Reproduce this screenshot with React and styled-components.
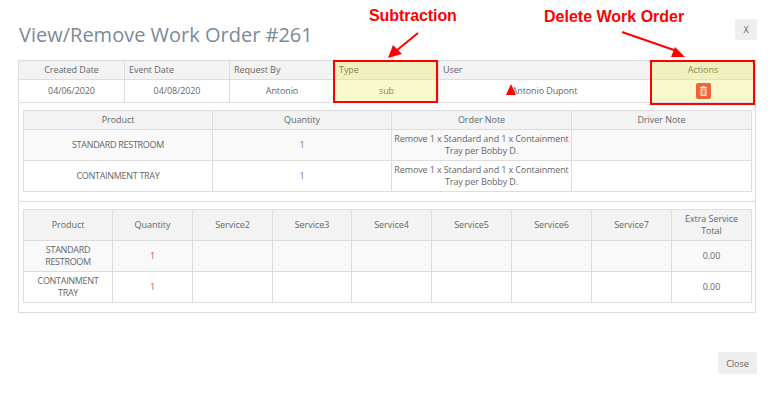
import React from 'react';
import styled, { createGlobalStyle } from 'styled-components';

const Global = createGlobalStyle`
  html, body { margin: 0; padding: 0; background: #fff; }
  body { font-family: "Open Sans", sans-serif; font-size: 9px; color: #666; }
`;
const Page = styled.div`
  position: relative;
  width: 776px;
  height: 405px;
  overflow: hidden;
  padding: 19px 19px 0 18px;
  box-sizing: border-box;
`;
const Header = styled.div`
  display: flex;
  justify-content: space-between;
  align-items: flex-start;
  height: 41px;
`;
const Title = styled.h3`
  margin: 5px 0 0 1px;
  font-size: 20px;
  line-height: 22px;
  font-weight: 400;
  color: #7b8a97;
`;
const GreyButton = styled.button`
  border: 0;
  border-radius: 2px;
  background: #eeeeee;
  color: #666;
  font: 400 9px "Open Sans", sans-serif;
  padding: 0;
  width: ${p => p.$w}px;
  height: ${p => p.$h}px;
`;
const Table = styled.table`
  width: ${p => p.$w}px;
  table-layout: fixed;
  border-collapse: collapse;
  border: 1px solid #ddd;
  margin: ${p => p.$m || 0};
`;
const Th = styled.th`
  background: ${p => (p.$hl ? '#f0f0c0' : '#f3f3f3')};
  border: 1px solid #ddd;
  height: ${p => p.$h}px;
  padding: 0 4px;
  font-size: 9px;
  line-height: 12px;
  font-weight: 400;
  letter-spacing: -0.05px;
  color: ${p => (p.$hl ? '#8a8a50' : '#666')};
  text-align: ${p => (p.$left ? 'left' : 'center')};
  box-sizing: border-box;
`;
const Td = styled.td`
  background: ${p => (p.$hl ? '#f8f8cc' : p.$odd ? '#f9f9f9' : '#fff')};
  border: 1px solid #ddd;
  height: ${p => p.$h}px;
  padding: 0 ${p => (p.$tight ? 2 : 4)}px;
  font-size: 9px;
  line-height: 12px;
  letter-spacing: ${p => p.$ls || '-0.1px'};
  color: ${p => p.$color || '#666'};
  text-align: center;
  box-sizing: border-box;
`;
const PanelCell = styled.td`
  border: 1px solid #ddd;
  padding: 0;
`;
const Section = styled.div`
  padding: ${p => p.$pad};
  border-bottom: ${p => (p.$line ? '1px solid #ddd' : '0')};
`;
const TrashButton = styled.span`
  display: inline-flex;
  align-items: center;
  justify-content: center;
  width: 15px;
  height: 16px;
  border-radius: 2px;
  background: #f0643a;
  vertical-align: middle;
  margin-top: -1px;
`;
const Footer = styled.div`
  display: flex;
  justify-content: flex-end;
  margin-top: 39px;
`;
const Callout = styled.div`
  position: absolute;
  left: ${p => p.$x}px;
  top: ${p => p.$y}px;
  font: 700 16px "Liberation Sans", Arial, sans-serif;
  line-height: 18px;
  letter-spacing: ${p => p.$ls || 0};
  color: #f00;
  white-space: nowrap;
`;
const Mark = styled.div`
  position: absolute;
  left: ${p => p.$x}px;
  top: ${p => p.$y}px;
  width: ${p => p.$w}px;
  height: ${p => p.$h}px;
  border: 2px solid #f00;
  box-sizing: border-box;
`;
const Overlay = styled.svg`
  position: absolute;
  left: 0;
  top: 0;
  pointer-events: none;
`;

const Cols = ({ w }) => <colgroup>{w.map((x, i) => <col key={i} style={{ width: x }} />)}</colgroup>;

const Trash = () => (
  <svg width="7" height="10" viewBox="0 0 7 10">
    <path fill="#fde3cf" d="M2.200 0h2.600l.4 1H7v1H0V1h1.800zM.5 2.500h6V9a1 1 0 0 1-1 1h-4a1 1 0 0 1-1-1z" />
    <path fill="#f58a63" d="M1.800 3.500h3.400V8.800H1.800z" />
  </svg>
);

const note = 'Remove 1 x Standard and 1 x Containment Tray per Bobby D.';
const services = ['Service2', 'Service3', 'Service4', 'Service5', 'Service6', 'Service7'];

export default function App() {
  return (
    <Page>
      <Global />
      <Header>
        <Title>View/Remove Work Order #261</Title>
        <GreyButton $w={22} $h={21}>X</GreyButton>
      </Header>
      <Table $w={737}>
        <Cols w={[106, 105, 105, 104, 212, 105]} />
        <tbody>
          <tr>
            <Th $h={19}>Created Date</Th>
            <Th $h={19} $left>Event Date</Th>
            <Th $h={19} $left>Request By</Th>
            <Th $h={19} $left $hl>Type</Th>
            <Th $h={19} $left>User</Th>
            <Th $h={19} $hl>Actions</Th>
          </tr>
          <tr>
            <Td $h={23}>04/06/2020</Td>
            <Td $h={23}>04/08/2020</Td>
            <Td $h={23}>Antonio</Td>
            <Td $h={23} $hl $color="#8a8a50">sub</Td>
            <Td $h={23}>Antonio Dupont</Td>
            <Td $h={23} $hl><TrashButton><Trash /></TrashButton></Td>
          </tr>
          <tr>
            <PanelCell colSpan={6}>
              <Section $pad="7px 4px 9px 4px" $line>
                <Table $w={728}>
                  <Cols w={[189, 179, 180, 180]} />
                  <tbody>
                    <tr>
                      <Th $h={19}>Product</Th><Th $h={19}>Quantity</Th><Th $h={19}>Order Note</Th><Th $h={19}>Driver Note</Th>
                    </tr>
                    <tr>
                      <Td $h={31} $odd $ls="-0.3px">STANDARD RESTROOM</Td>
                      <Td $h={31} $odd $color="#5f7f95">1</Td>
                      <Td $h={31} $odd $tight $ls="-0.12px">{note}</Td>
                      <Td $h={31} $odd />
                    </tr>
                    <tr>
                      <Td $h={31} $ls="-0.3px">CONTAINMENT TRAY</Td>
                      <Td $h={31} $color="#5f7f95">1</Td>
                      <Td $h={31} $tight $ls="-0.12px">{note}</Td>
                      <Td $h={31} />
                    </tr>
                  </tbody>
                </Table>
              </Section>
              <Section $pad="7px 4px 9px 4px">
                <Table $w={728}>
                  <Cols w={[89, 80, 80, 79, 80, 80, 80, 80, 80]} />
                  <tbody>
                    <tr>
                      <Th $h={31}>Product</Th>
                      <Th $h={31}>Quantity</Th>
                      {services.map(s => <Th key={s} $h={31}>{s}</Th>)}
                      <Th $h={31}>Extra Service Total</Th>
                    </tr>
                    <tr>
                      <Td $h={31} $odd $ls="-0.3px">STANDARD RESTROOM</Td>
                      <Td $h={31} $odd $color="#a5655f">1</Td>
                      {services.map(s => <Td key={s} $h={31} $odd />)}
                      <Td $h={31} $odd>0.00</Td>
                    </tr>
                    <tr>
                      <Td $h={31} $ls="-0.3px">CONTAINMENT TRAY</Td>
                      <Td $h={31} $color="#a5655f">1</Td>
                      {services.map(s => <Td key={s} $h={31} />)}
                      <Td $h={31}>0.00</Td>
                    </tr>
                  </tbody>
                </Table>
              </Section>
            </PanelCell>
          </tr>
        </tbody>
      </Table>
      <Footer>
        <GreyButton $w={39} $h={22}>Close</GreyButton>
      </Footer>

      <Callout $x={369} $y={7} $ls="-0.1px">Subtraction</Callout>
      <Callout $x={544} $y={8}>Delete Work Order</Callout>
      <Mark $x={333} $y={60} $w={105} $h={43} />
      <Mark $x={650} $y={60} $w={105} $h={45} />
      <Overlay width="776" height="405" viewBox="0 0 776 405">
        <path d="M418 33 L396 51" stroke="#f00" strokeWidth="2" fill="none" />
        <polygon points="388,58 393,45 402,54" fill="#f00" />
        <path d="M622 32 L674 50" stroke="#f00" strokeWidth="2" fill="none" />
        <polygon points="685,57 675,47 671,57" fill="#f00" />
        <polygon points="511,84 506,95 516,95" fill="#f00" />
      </Overlay>
    </Page>
  );
}
